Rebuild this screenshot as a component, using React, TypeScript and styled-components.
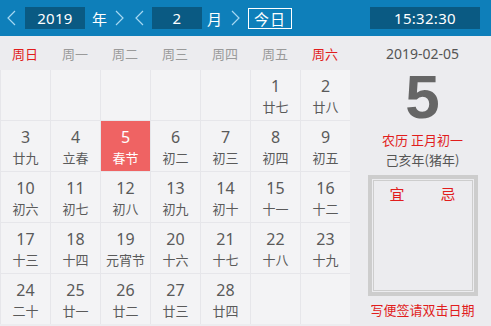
import React from "react";
import styled, { createGlobalStyle } from "styled-components";

const GlobalStyle = createGlobalStyle`
  body {
    margin: 0;
    background: #ececef;
    font-family: "Noto Sans", "Noto Sans CJK SC", sans-serif;
  }
`;

const Frame = styled.div`
  width: 491px;
  height: 326px;
  overflow: hidden;
  background: #ececef;
  display: flex;
  flex-direction: column;
`;

const TopBar = styled.div`
  height: 36px;
  background: #0e7fba;
  display: flex;
  align-items: center;
  color: #fff;
  font-size: 15px;
`;

const Chevron = styled.svg<{ $ml: number }>`
  margin-left: ${(p) => p.$ml}px;
  flex: none;
`;

const ValueBox = styled.div<{ $ml: number; $w: number; $mr?: number }>`
  margin-left: ${(p) => p.$ml}px;
  margin-right: ${(p) => p.$mr ?? 0}px;
  width: ${(p) => p.$w}px;
  height: 22px;
  background: #0a5a83;
  display: flex;
  align-items: center;
  justify-content: center;
  font-size: 15px;
  letter-spacing: 0.3px;
`;

const Unit = styled.span<{ $ml: number }>`
  margin-left: ${(p) => p.$ml}px;
  font-family: "Noto Sans CJK SC", sans-serif;
  font-size: 15px;
  line-height: 1;
`;

const TodayButton = styled.div`
  margin-left: 8px;
  width: 42px;
  height: 19px;
  border: 1px solid #fff;
  display: flex;
  align-items: center;
  justify-content: center;
  font-family: "Noto Sans CJK SC", sans-serif;
  font-size: 15px;
  letter-spacing: 1px;
`;

const Spacer = styled.div`
  flex: 1;
`;

const Body = styled.div`
  flex: 1;
  display: flex;
`;

const CalendarSide = styled.div`
  width: 350px;
  display: flex;
  flex-direction: column;
`;

const WeekRow = styled.div`
  height: 34px;
  display: grid;
  grid-template-columns: repeat(7, 50px);
  align-items: center;
`;

const WeekName = styled.div<{ $weekend: boolean }>`
  text-align: center;
  font-family: "Noto Sans CJK SC", sans-serif;
  font-size: 13px;
  color: ${(p) => (p.$weekend ? "#e11d1d" : "#9a9a9a")};
`;

const Grid = styled.div`
  display: grid;
  grid-template-columns: repeat(7, 49px);
  grid-auto-rows: 50px;
  gap: 1px;
  padding-left: 1px;
  background: #e6e6ea;
`;

const Cell = styled.div<{ $today?: boolean }>`
  background: ${(p) => (p.$today ? "#ef6363" : "#f3f3f5")};
  color: ${(p) => (p.$today ? "#fff" : "#5a5a5a")};
  display: flex;
  flex-direction: column;
  align-items: center;
  padding-top: 5px;
  box-sizing: border-box;
`;

const DayNum = styled.div`
  font-size: 16px;
  line-height: 22px;
`;

const Lunar = styled.div`
  font-family: "Noto Sans CJK SC", sans-serif;
  font-size: 13px;
  line-height: 20px;
  white-space: nowrap;
`;

const InfoSide = styled.div`
  flex: 1;
  display: flex;
  flex-direction: column;
  align-items: center;
  padding-left: 4px;
`;

const DateText = styled.div`
  margin-top: 9px;
  font-size: 14px;
  color: #555;
  line-height: 18px;
`;

const BigDay = styled.div`
  margin-top: 4px;
  font-family: "Liberation Sans", sans-serif;
  font-weight: bold;
  font-size: 62px;
  line-height: 60px;
  color: #666;
`;

const RedLine = styled.div`
  margin-top: 3px;
  font-family: "Noto Sans CJK SC", sans-serif;
  font-size: 13px;
  line-height: 20px;
  color: #e11d1d;
`;

const GrayLine = styled.div`
  font-family: "Noto Sans CJK SC", sans-serif;
  font-size: 13px;
  line-height: 20px;
  color: #555;
`;

const NoteBox = styled.div`
  margin-top: 5px;
  width: 110px;
  height: 121px;
  box-sizing: border-box;
  border: 4px solid #cdcdcd;
  padding: 1px;
`;

const NoteInner = styled.div`
  height: 100%;
  box-sizing: border-box;
  border: 1px solid #cdcdcd;
  display: flex;
  justify-content: space-between;
  align-items: flex-start;
  padding: 2px 16px 0;
`;

const NoteLabel = styled.span`
  font-family: "Noto Sans CJK SC", sans-serif;
  font-size: 15px;
  color: #e11d1d;
`;

const Hint = styled.div`
  margin-top: 5px;
  font-family: "Noto Sans CJK SC", sans-serif;
  font-size: 13px;
  color: #e11d1d;
  line-height: 18px;
`;

const ChevronIcon: React.FC<{ dir: "l" | "r"; ml: number }> = ({ dir, ml }) => (
  <Chevron $ml={ml} width="9" height="16" viewBox="0 0 9 16">
    <polyline
      points={dir === "l" ? "8,1 1,8 8,15" : "1,1 8,8 1,15"}
      fill="none"
      stroke="#a6d8f2"
      strokeWidth="1.2"
    />
  </Chevron>
);

const weekNames = ["周日", "周一", "周二", "周三", "周四", "周五", "周六"];

const lunar = [
  "廿七", "廿八", "廿九", "立春", "春节", "初二", "初三", "初四", "初五", "初六",
  "初七", "初八", "初九", "初十", "十一", "十二", "十三", "十四", "元宵节", "十六",
  "十七", "十八", "十九", "二十", "廿一", "廿二", "廿三", "廿四",
];

const firstWeekday = 5;
const today = 5;

const App: React.FC = () => {
  const cells: (number | null)[] = [];
  for (let i = 0; i < firstWeekday; i++) cells.push(null);
  for (let d = 1; d <= 28; d++) cells.push(d);
  while (cells.length < 35) cells.push(null);

  return (
    <>
      <GlobalStyle />
      <Frame>
        <TopBar>
          <ChevronIcon dir="l" ml={7} />
          <ValueBox $ml={9} $w={60}>2019</ValueBox>
          <Unit $ml={7}>年</Unit>
          <ChevronIcon dir="r" ml={8} />
          <ChevronIcon dir="l" ml={11} />
          <ValueBox $ml={8} $w={50}>2</ValueBox>
          <Unit $ml={5}>月</Unit>
          <ChevronIcon dir="r" ml={9} />
          <TodayButton>今日</TodayButton>
          <Spacer />
          <ValueBox $ml={0} $w={110} $mr={11}>
            15:32:30
          </ValueBox>
        </TopBar>
        <Body>
          <CalendarSide>
            <WeekRow>
              {weekNames.map((w, i) => (
                <WeekName key={w} $weekend={i === 0 || i === 6}>
                  {w}
                </WeekName>
              ))}
            </WeekRow>
            <Grid>
              {cells.map((d, i) => (
                <Cell key={i} $today={d === today}>
                  {d && (
                    <>
                      <DayNum>{d}</DayNum>
                      <Lunar>{lunar[d - 1]}</Lunar>
                    </>
                  )}
                </Cell>
              ))}
            </Grid>
          </CalendarSide>
          <InfoSide>
            <DateText>2019-02-05</DateText>
            <BigDay>5</BigDay>
            <RedLine>农历 正月初一</RedLine>
            <GrayLine>己亥年(猪年)</GrayLine>
            <NoteBox>
              <NoteInner>
                <NoteLabel>宜</NoteLabel>
                <NoteLabel>忌</NoteLabel>
              </NoteInner>
            </NoteBox>
            <Hint>写便签请双击日期</Hint>
          </InfoSide>
        </Body>
      </Frame>
    </>
  );
};

export default App;
